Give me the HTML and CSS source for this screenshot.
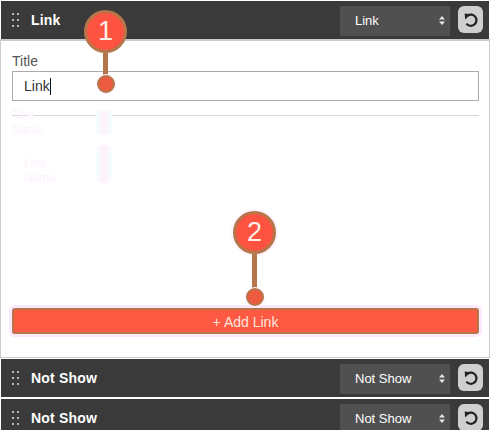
FILE: index.html
```html
<!DOCTYPE html>
<html lang="en">
<head>
<meta charset="utf-8">
<title>Link</title>
<link rel="stylesheet" href="styles.css">
</head>
<body>
<div class="stack">
  <section class="item">
    <header class="bar">
      <span class="grip"><i></i><i></i><i></i><i></i><i></i><i></i></span>
      <span class="name">Link</span>
      <span class="select"><span>Link</span><svg class="updown" width="6" height="9" viewBox="0 0 6 9"><path d="M3 0 6 3.4H0zM3 9 0 5.6H6z"/></svg></span>
      <button class="reset"><svg width="16" height="16" viewBox="0 0 16 16"><path class="undo" d="M4.6 3.6A5.6 5.6 0 1 1 3.4 11.6"/><path class="undo-tip" d="M1.6 1.6 7.6 2.2 2.2 7.6z"/></svg></button>
    </header>
    <div class="body">
      <label class="title">Title</label>
      <div class="input"><span>Link</span><b class="caret"></b></div>
      <hr class="rule">
      <div class="ghosts">
        <div class="ghost">Title</div>
        <div class="ghost">Name</div>
        <div class="ghost indent">Link</div>
        <div class="ghost indent">Name</div>
      </div>
      <button class="add">+ Add Link</button>
    </div>
  </section>
  <section class="item">
    <header class="bar">
      <span class="grip"><i></i><i></i><i></i><i></i><i></i><i></i></span>
      <span class="name">Not Show</span>
      <span class="select"><span>Not Show</span><svg class="updown" width="6" height="9" viewBox="0 0 6 9"><path d="M3 0 6 3.4H0zM3 9 0 5.6H6z"/></svg></span>
      <button class="reset"><svg width="16" height="16" viewBox="0 0 16 16"><path class="undo" d="M4.6 3.6A5.6 5.6 0 1 1 3.4 11.6"/><path class="undo-tip" d="M1.6 1.6 7.6 2.2 2.2 7.6z"/></svg></button>
    </header>
  </section>
  <section class="item">
    <header class="bar">
      <span class="grip"><i></i><i></i><i></i><i></i><i></i><i></i></span>
      <span class="name">Not Show</span>
      <span class="select"><span>Not Show</span><svg class="updown" width="6" height="9" viewBox="0 0 6 9"><path d="M3 0 6 3.4H0zM3 9 0 5.6H6z"/></svg></span>
      <button class="reset"><svg width="16" height="16" viewBox="0 0 16 16"><path class="undo" d="M4.6 3.6A5.6 5.6 0 1 1 3.4 11.6"/><path class="undo-tip" d="M1.6 1.6 7.6 2.2 2.2 7.6z"/></svg></button>
    </header>
  </section>
</div>
<div class="pin pin-one"><span class="badge">1</span><span class="stem"></span><span class="dot"></span></div>
<div class="pin pin-two"><span class="badge">2</span><span class="stem"></span><span class="dot"></span></div>
<span class="trace trace-stem"></span>
<span class="trace trace-dot"></span>
</body>
</html>
```
FILE: styles.css
```css
* { box-sizing: border-box; }
html, body { margin: 0; padding: 0; }
body {
  width: 491px;
  height: 430px;
  overflow: hidden;
  position: relative;
  background: #fff;
  font-family: "Liberation Sans", Arial, sans-serif;
  color: #333;
}
.stack {
  display: flex;
  flex-direction: column;
  gap: 1px;
  padding-top: 1px;
  width: 490px;
}
.item:last-child { margin-top: 1px; }
.bar {
  height: 38px;
  margin-left: 1px;
  margin-right: 1px;
  background: #3a3a3a;
  display: flex;
  align-items: center;
  padding: 0 6px 0 11px;
  color: #fff;
}
.grip {
  display: grid;
  grid-template-columns: 2px 2px;
  grid-auto-rows: 2px;
  gap: 4px 3px;
  width: 19px;
}
.grip i { background: #b8b8b8; display: block; }
.name {
  flex: 1;
  font-size: 14px;
  font-weight: 700;
  letter-spacing: 0.2px;
  padding-bottom: 1px;
}
.select {
  width: 110px;
  height: 30px;
  align-self: flex-start;
  margin-top: 5px;
  background: #505050;
  margin-right: 8px;
  border-radius: 1px;
  display: flex;
  align-items: center;
  justify-content: space-between;
  padding: 0 5px 2px 15px;
  font-size: 13px;
  color: #fff;
}
.updown { fill: #e8e8e8; display: block; margin-top: 1px; }
.reset {
  width: 25px;
  height: 27px;
  align-self: flex-start;
  margin-top: 5px;
  padding: 0;
  border: 0;
  border-radius: 6px;
  background: #cfcfcf;
  display: flex;
  align-items: center;
  justify-content: center;
}
.undo { fill: none; stroke: #222; stroke-width: 2.2; }
.undo-tip { fill: #222; }
.body {
  height: 319px;
  border: 1px solid #ccc;
  border-top: 2px solid #ccc;
  margin-top: 0;
  padding: 13px 10px 0 11px;
  display: flex;
  flex-direction: column;
}
.title {
  font-size: 14px;
  line-height: 15px;
  color: #555;
  height: 17px;
}
.input {
  height: 30px;
  border: 1px solid #aaa;
  display: flex;
  align-items: center;
  padding-left: 11px;
  font-size: 14px;
  color: #333;
}
.caret { width: 1px; height: 17px; background: #111; }
.rule {
  margin: 14px 0 0;
  border: 0;
  height: 1px;
  background: #d6d6d6;
  width: 100%;
}
.ghosts { height: 192px; }
.ghost {
  font-size: 12px;
  line-height: 15px;
  color: #fdf2fd;
  position: relative;
  top: -8px;
}
.ghost.indent { margin-left: 12px; }
.ghost:nth-child(3) { margin-top: 18px; }
.add {
  height: 26px;
  border: 2px solid #b5764a;
  border-radius: 3px;
  background: #fe5a43;
  color: #fde5dc;
  font-family: inherit;
  font-size: 14px;
  padding: 1px 0 0;
  box-shadow: 0 0 0 3px #fce8fc;
}
.pin {
  position: absolute;
  width: 43px;
  display: flex;
  flex-direction: column;
  align-items: center;
}
.pin-one { left: 84px; top: 10px; }
.pin-two { left: 233px; top: 211px; }
.badge {
  width: 43px;
  height: 43px;
  flex: none;
  border-radius: 50%;
  border: 3px solid #b5764a;
  background: #fe5340;
  color: #fdeee8;
  font-size: 27px;
  line-height: 37px;
  text-align: center;
}
.pin-two .badge { box-shadow: 0 0 0 2px #fdf2fd; }
.stem { width: 5px; background: #b5764a; flex: none; }
.pin-one .stem { height: 23px; }
.pin-two .stem { height: 35px; }
.dot {
  width: 18px;
  height: 18px;
  flex: none;
  margin-top: -1px;
  border-radius: 50%;
  border: 2px solid #b5764a;
  background: #ec5a3f;
  box-shadow: 0 0 0 1px #fdf0fd;
}
.trace {
  position: absolute;
  left: 96px;
  width: 16px;
  background: linear-gradient(90deg, #f4ffff, #fef2fd 40%, #fef2fd 60%, #f4ffff);
}
.trace-stem { top: 110px; height: 24px; }
.trace-dot { top: 145px; height: 38px; border-radius: 8px; }
```
